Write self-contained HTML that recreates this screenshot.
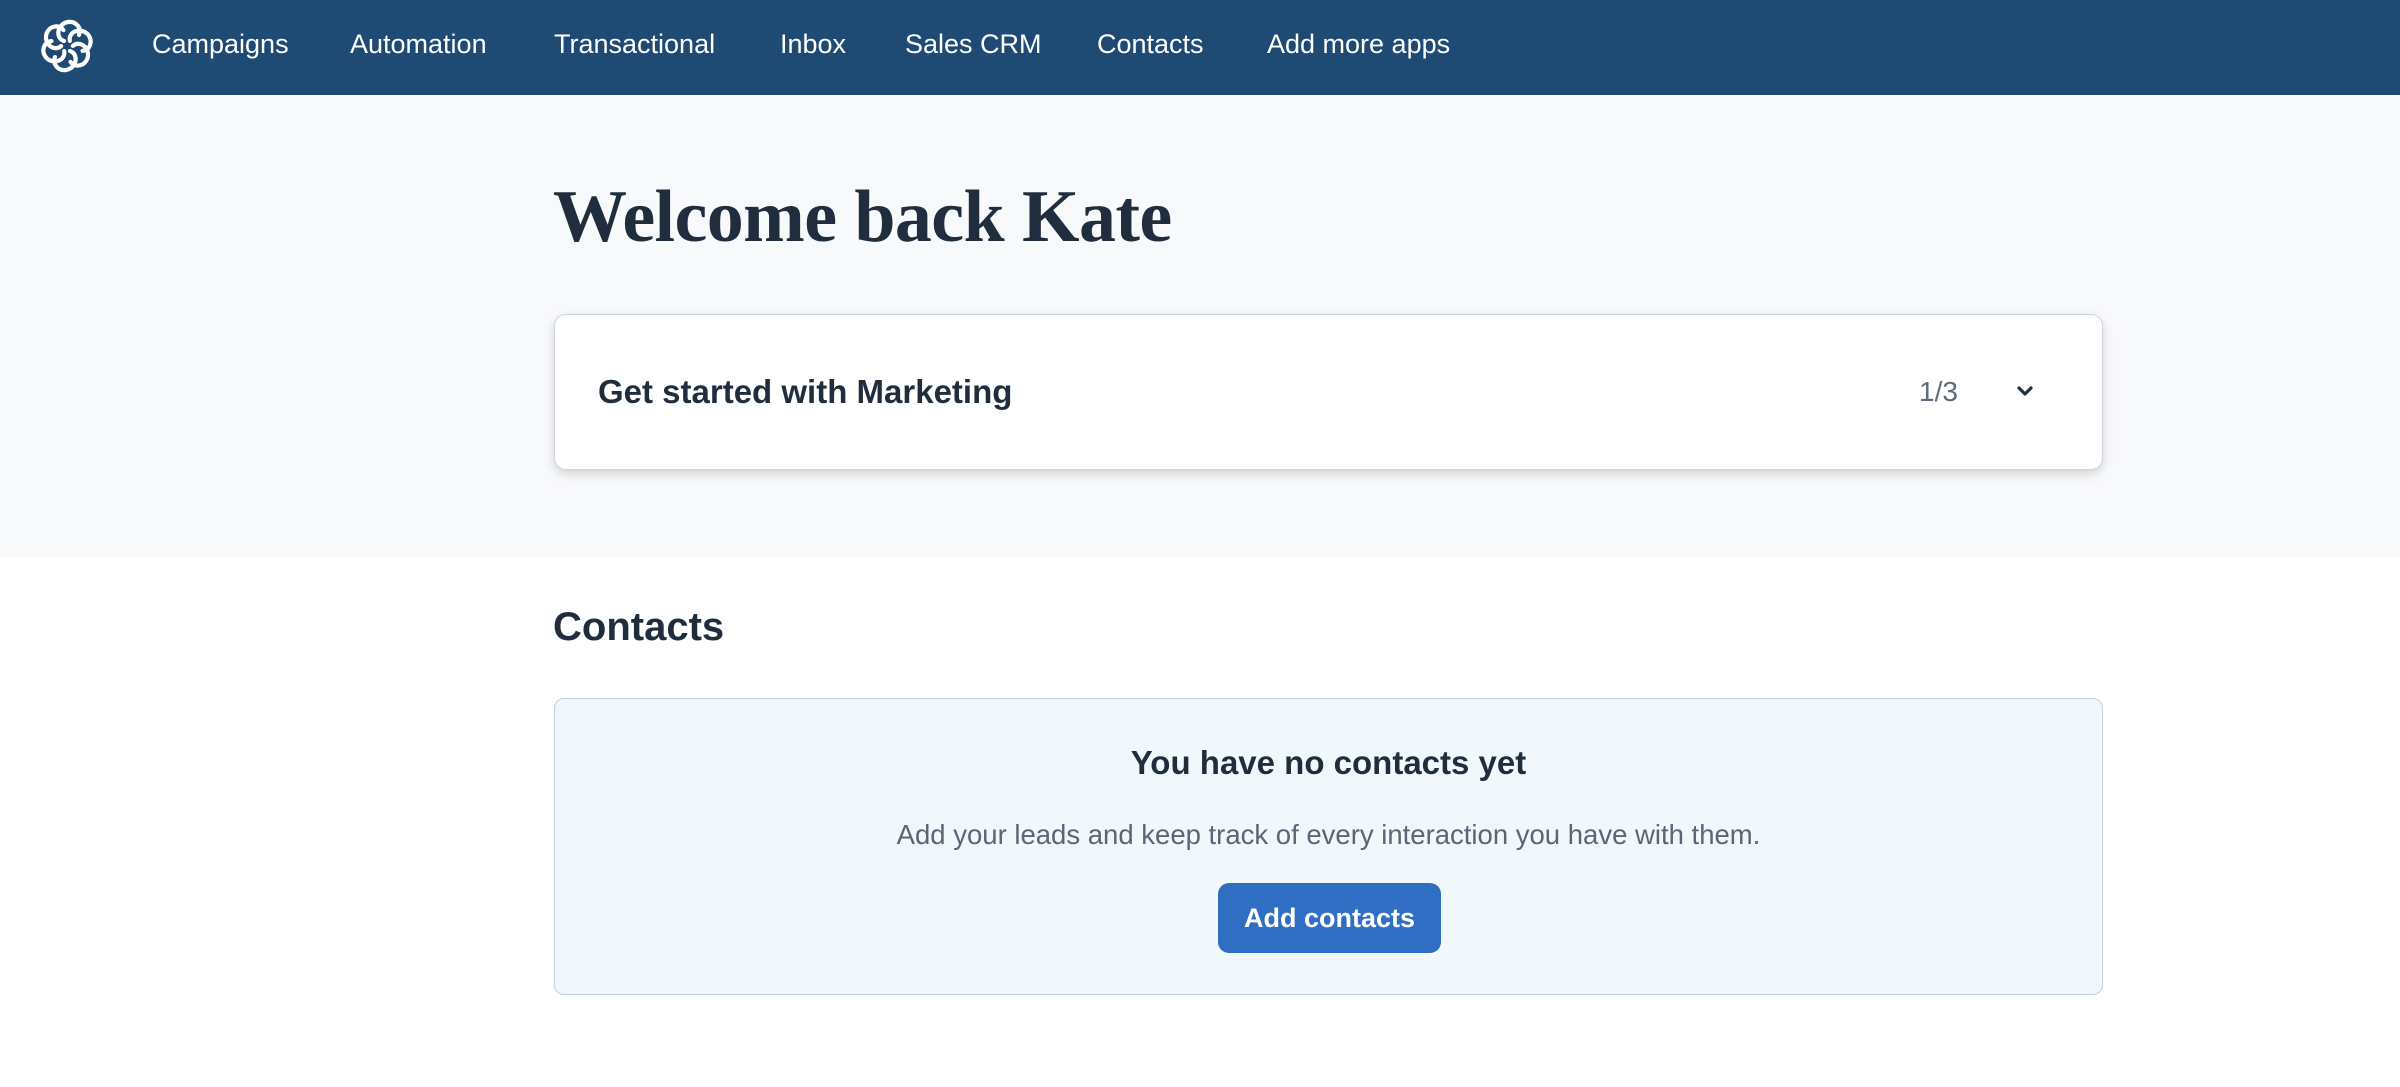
<!DOCTYPE html>
<html><head><meta charset="utf-8"><style>
*{margin:0;padding:0;box-sizing:border-box}
body{width:2400px;height:1087px;background:#fff;font-family:"Liberation Sans",Arial,sans-serif;color:#1f2d3d;position:relative;overflow:hidden}
.nav{position:absolute;left:0;top:0;width:2400px;height:95px;background:#1f4a73}
.nav a{position:absolute;top:26px;color:#fff;font-size:27px;text-decoration:none;line-height:36px}
.hero{position:absolute;left:0;top:95px;width:2400px;height:462px;background:#f8f9fb}
h1{position:absolute;left:553px;top:172px;font-family:"Liberation Serif",serif;font-weight:700;font-size:74px;color:#1f2d3d;letter-spacing:-0.6px;line-height:90px}
.card{position:absolute;left:554px;top:314px;width:1549px;height:156px;background:#fff;border:1.5px solid #cdd5df;border-radius:12px;box-shadow:0 4px 10px rgba(0,0,0,.15)}
.card .t{position:absolute;left:43px;top:57px;font-size:33px;font-weight:700;line-height:40px;color:#1f2d3d}
.card .n{position:absolute;left:1364px;top:58px;font-size:28px;color:#5f6b7a;line-height:38px}
h2{position:absolute;left:553px;top:603px;font-size:40px;font-weight:700;line-height:48px;color:#1f2d3d}
.box{position:absolute;left:554px;top:698px;width:1549px;height:297px;background:#f1f8fc;border:1.5px solid #c3d0e0;border-radius:10px;text-align:center}
.box .a{position:absolute;left:0;right:0;top:43px;font-size:33px;font-weight:700;line-height:42px}
.box .b{position:absolute;left:0;right:0;top:119px;font-size:27.5px;color:#5b6575;line-height:34px}
.btn{position:absolute;left:663px;top:184px;width:223px;height:70px;background:#2f6ec3;border-radius:11px;color:#fff;font-size:27px;font-weight:700;line-height:70px}
</style></head><body>
<div class="nav">
<svg style="position:absolute;left:38px;top:17px" width="58" height="58" viewBox="-29 -29 58 58">
<g fill="none" stroke="#fff" stroke-width="4.2" stroke-linecap="round">
<g id="p"><path d="M-3,-5 C-12,-8 -10,-22 1,-24 C9,-25 15,-18 12,-11"/></g>
<use href="#p" transform="rotate(60)"/><use href="#p" transform="rotate(120)"/><use href="#p" transform="rotate(180)"/><use href="#p" transform="rotate(240)"/><use href="#p" transform="rotate(300)"/>
</g></svg>
<a style="left:152px">Campaigns</a>
<a style="left:350px">Automation</a>
<a style="left:554px">Transactional</a>
<a style="left:780px">Inbox</a>
<a style="left:905px">Sales CRM</a>
<a style="left:1097px">Contacts</a>
<a style="left:1267px">Add more apps</a>
</div>
<div class="hero"></div>
<h1>Welcome back Kate</h1>
<div class="card"><div class="t">Get started with Marketing</div><div class="n">1/3</div>
<svg style="position:absolute;left:1461px;top:70px" width="18" height="14" viewBox="0 0 18 14"><path d="M3,3 L9,9 L15,3" fill="none" stroke="#1f2d3d" stroke-width="3.2" stroke-linecap="round" stroke-linejoin="round"/></svg>
</div>
<h2>Contacts</h2>
<div class="box"><div class="a">You have no contacts yet</div><div class="b">Add your leads and keep track of every interaction you have with them.</div><div class="btn">Add contacts</div></div>
</body></html>
